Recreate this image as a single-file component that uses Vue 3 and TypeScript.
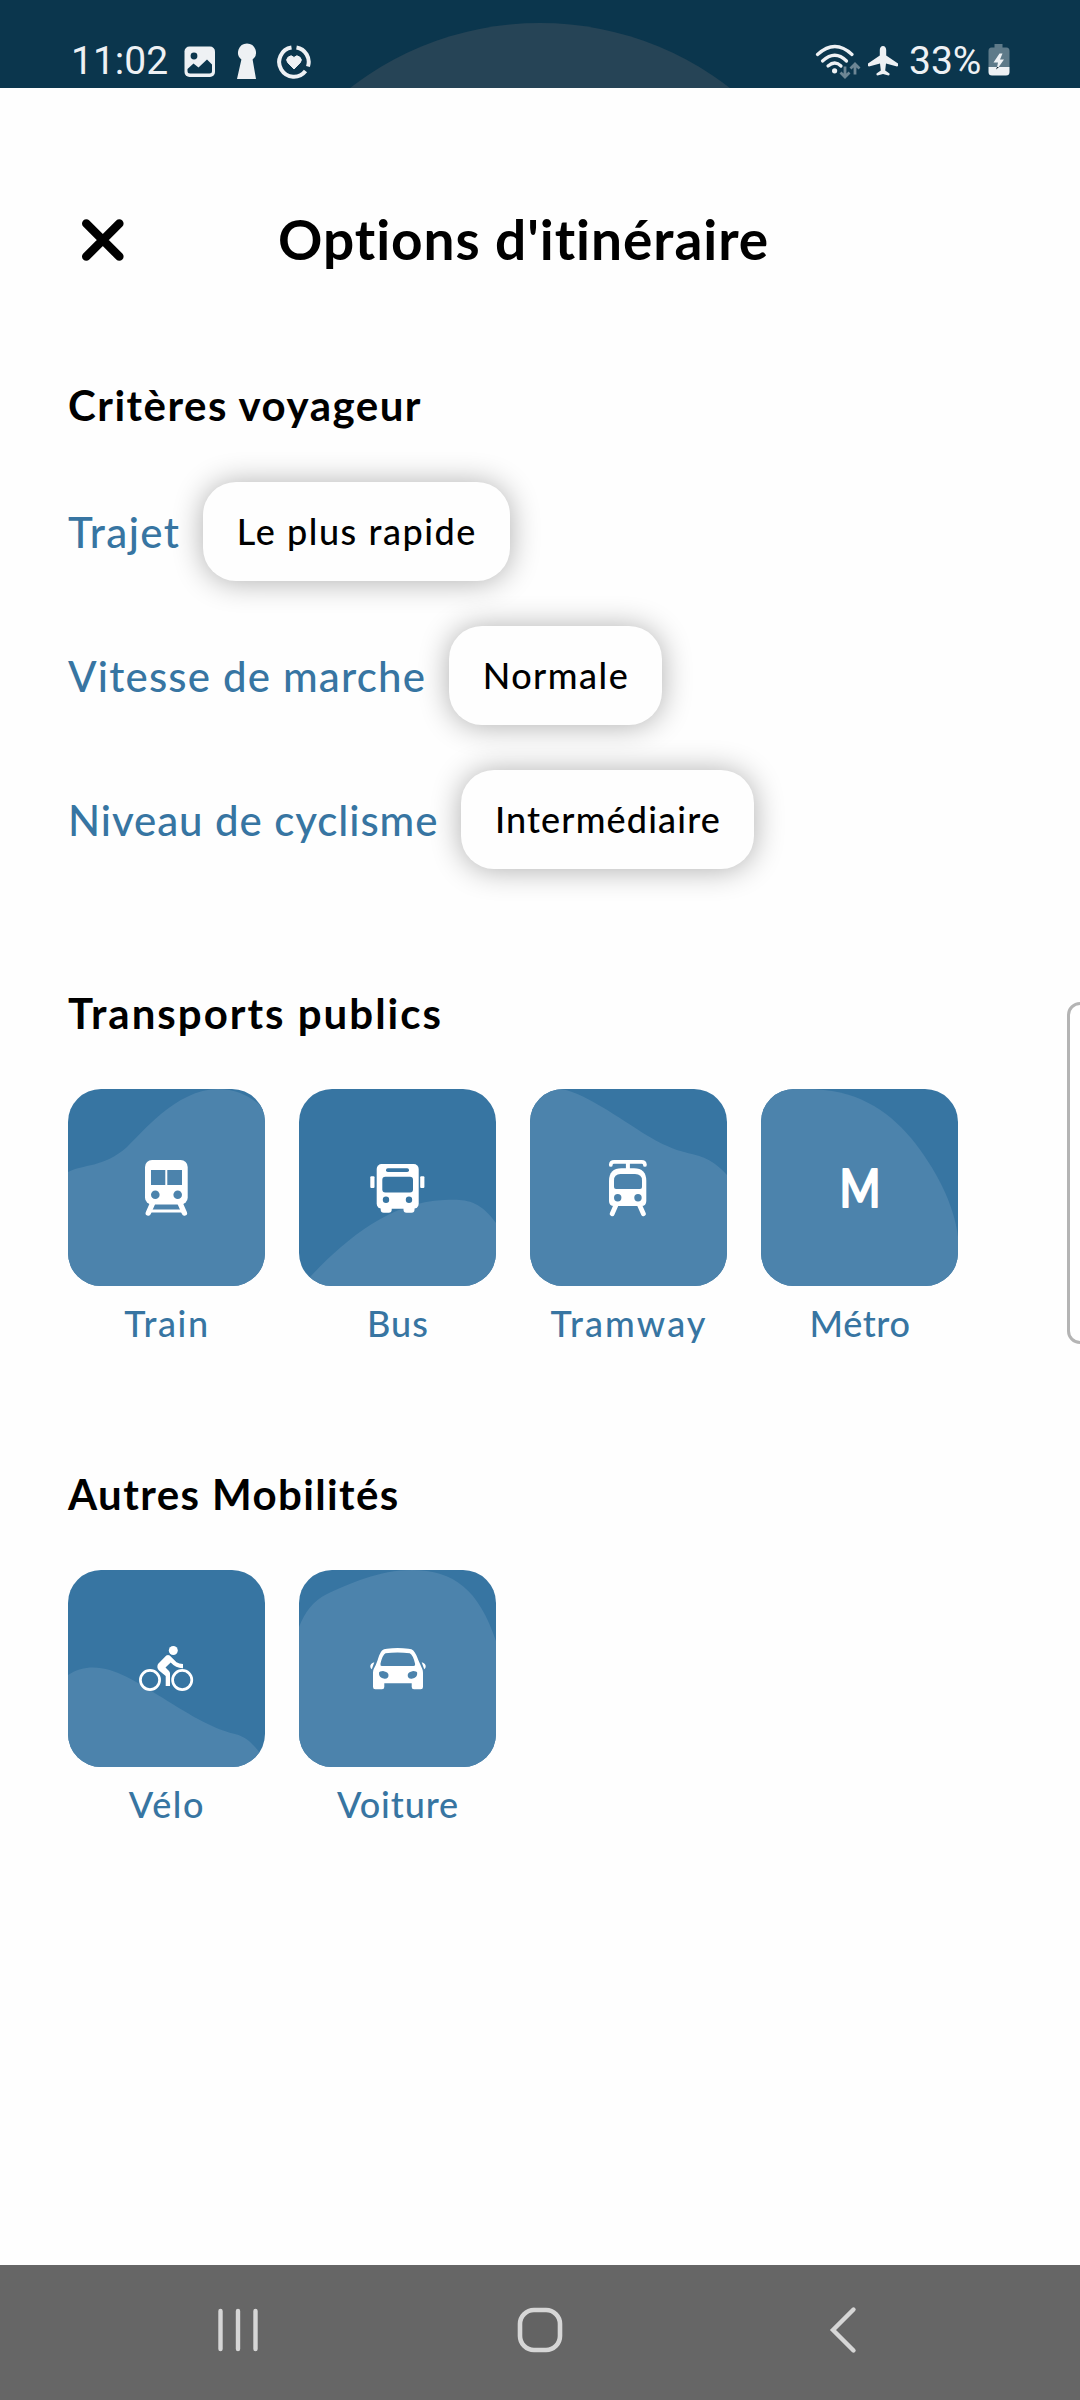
<script setup lang="ts">
interface Criterion {
  label: string
  value: string
  labelTracking: number
  valueTracking: number
}

interface Mode {
  id: 'train' | 'bus' | 'tram' | 'metro' | 'bike' | 'car'
  name: string
  wave: string
  tracking: number
}

interface ModeGroup {
  title: string
  tracking: number
  modes: Mode[]
}

const criteria: Criterion[] = [
  { label: 'Trajet', value: 'Le plus rapide', labelTracking: 1.4, valueTracking: 1.55 },
  { label: 'Vitesse de marche', value: 'Normale', labelTracking: 1.18, valueTracking: 1.5 },
  { label: 'Niveau de cyclisme', value: 'Intermédiaire', labelTracking: 0.92, valueTracking: 1.15 },
]

const groups: ModeGroup[] = [
  {
    title: 'Transports publics',
    tracking: 2,
    modes: [
      { id: 'train', name: 'Train', tracking: 1.6, wave: 'M0 83C15 75 35 79 59 58C72 46 108 0 150 0C172 0 184 10 197 19V197H0Z' },
      { id: 'bus', name: 'Bus', tracking: 1.1, wave: 'M0 199L11 188C45 152 90 113 145 111C165 110 180 110 197 134V197Z' },
      { id: 'tram', name: 'Tramway', tracking: 2.1, wave: 'M0 0H28C50 0 90 30 118 47C140 60 150 62 162 65C180 69 190 78 197 86V197H0Z' },
      { id: 'metro', name: 'Métro', tracking: 0.6, wave: 'M0 0H45C95 0 125 20 150 49C175 80 193 115 197 148V197H0Z' },
    ],
  },
  {
    title: 'Autres Mobilités',
    tracking: 1.4,
    modes: [
      { id: 'bike', name: 'Vélo', tracking: 1.6, wave: 'M0 105C30 85 65 110 85 122C110 137 140 158 167 164C180 167 187 177 192 183L197 190V197H0Z' },
      { id: 'car', name: 'Voiture', tracking: 0.9, wave: 'M0 57C6 42 14 31 28 24C50 14 80 0 113 0C155 0 180 20 197 71V197H0Z' },
    ],
  },
]
</script>

<template>
  <div class="screen">
    <div class="status">
      <svg class="arc" width="1080" height="88" viewBox="0 0 1080 88"><circle cx="540" cy="333" r="310" fill="#264456" /></svg>
      <span class="time">11:02</span>
      <svg class="s-image" width="32" height="32" viewBox="0 0 32 32">
        <rect x=".5" y=".5" width="30.5" height="30.5" rx="5" fill="#eef1f4" />
        <circle cx="10" cy="10" r="3.4" fill="#0b364d" />
        <path d="M3.5 23L9.5 17.5L14.5 21.5L23 13.5L28 18.5V25Q28 27.5 25.5 27.5H6Q3.5 27.5 3.5 25Z" fill="#0b364d" />
      </svg>
      <svg class="s-key" width="20" height="36" viewBox="0 0 20 36">
        <path d="M10 .5a9 9 0 0 1 5.6 16L19 36H0L4.400 16.500A9 9 0 0 1 10 .5Z" fill="#eef1f4" />
      </svg>
      <svg class="s-ring" width="34" height="34" viewBox="0 0 34 34">
        <g fill="none" stroke="#eef1f4" stroke-width="4">
          <path d="M14.500 2.500A14.700 14.700 0 1 0 28.500 26" />
          <path d="M19.500 2.500A14.700 14.700 0 0 1 31 21.500" />
        </g>
        <path d="M17 24L10.800 17.700A4 4 0 0 1 17 12.500A4 4 0 0 1 23.200 17.700Z" fill="#eef1f4" stroke="#eef1f4" stroke-width="1" stroke-linejoin="round" />
      </svg>
      <svg class="s-wifi" width="48" height="36" viewBox="0 0 48 36">
        <g fill="none" stroke="#eef1f4" stroke-width="3.200" stroke-linecap="round">
          <path d="M2.500 10.500Q20 -5.500 37 10.500" />
          <path d="M7.500 17Q20 5.500 31.500 17" />
          <path d="M13 22Q20 16 26 22" />
        </g>
        <circle cx="19.600" cy="26.800" r="2.600" fill="#eef1f4" />
        <g fill="none" stroke="#6d8694" stroke-width="2.800">
          <path d="M30 22.500V33M25.500 28.500L30 33L34.500 28.500" />
          <path d="M40 30.500V20M35.500 24.500L40 20L44.500 24.500" />
        </g>
      </svg>
      <svg class="s-plane" width="32" height="32" viewBox="0 0 32 32">
        <path d="M16 1C14 1 12.800 3 12.800 5V10.500L1 18.500Q.5 21 2 21.500L13 18.500L13.800 25.500L9.500 28.500Q9 30.500 10.500 30.500L16 29L21.500 30.500Q23 30.500 22.500 28.500L18.200 25.500L19 18.500L30 21.500Q31.500 21 31 18.500L19.200 10.500V5C19.200 3 18 1 16 1Z" fill="#eef1f4" />
      </svg>
      <span class="level">33%</span>
      <svg class="s-batt" width="22" height="33" viewBox="0 0 22 33">
        <path d="M6.500 0H14.500V3.500H18.500Q21.500 3.500 21.500 7V23H.5V7Q.5 3.500 3.500 3.500H6.500Z" fill="#5e7a89" />
        <path d="M.5 23H21.500V28Q21.500 31.500 18 31.500H4Q.5 31.500 .5 28Z" fill="#eef1f4" />
        <path d="M11.500 9.500L5.500 18.500H10L8.500 26L16 15.500H12L14.500 9.500Z" fill="#eef1f4" />
        <path d="M8 25.500L9 23H11Z" fill="#0b1c26" />
      </svg>
    </div>

    <header class="head">
      <svg width="70" height="70" viewBox="0 0 70 70">
        <path d="M18.300 18.500L51.300 51.500M51.300 18.500L18.300 51.500" stroke="#000" stroke-width="8.600" stroke-linecap="round" />
      </svg>
      <h1>Options d'itinéraire</h1>
    </header>

    <section class="criteria">
      <h2 style="letter-spacing: 1.5px">Critères voyageur</h2>
      <div class="rows">
        <div v-for="c in criteria" :key="c.label" class="row">
          <span class="label" :style="{ letterSpacing: c.labelTracking + 'px' }">{{ c.label }}</span>
          <button class="pill" :style="{ letterSpacing: c.valueTracking + 'px' }">{{ c.value }}</button>
        </div>
      </div>
    </section>

    <section v-for="g in groups" :key="g.title" class="group">
      <h2 :style="{ letterSpacing: g.tracking + 'px' }">{{ g.title }}</h2>
      <div class="tiles">
        <div v-for="m in g.modes" :key="m.id" class="mode">
          <svg class="tile" width="197" height="197" viewBox="0 0 197 197">
            <path :d="m.wave" fill="#4c83ac" />

            <g v-if="m.id === 'train'">
              <rect x="77" y="71" width="42.700" height="44.500" rx="7" fill="#fff" />
              <path d="M83 81h14.300v15H83zM99.300 81H114v15H99.300z" fill="#4c83ac" />
              <circle cx="87.300" cy="105.700" r="4.300" fill="#4c83ac" />
              <circle cx="109.700" cy="105.700" r="4.300" fill="#4c83ac" />
              <path d="M84.500 114.500L80.300 124M112.200 114.500L116.400 124" stroke="#fff" stroke-width="5.400" stroke-linecap="round" />
              <path d="M82 122H115" stroke="#fff" stroke-width="3.200" />
            </g>

            <g v-else-if="m.id === 'bus'">
              <rect x="77.700" y="75" width="42" height="44.700" rx="5" fill="#fff" />
              <rect x="81.700" y="115" width="11" height="8.700" rx="3" fill="#fff" />
              <rect x="104.500" y="115" width="11" height="8.700" rx="3" fill="#fff" />
              <rect x="71.300" y="87.300" width="4.200" height="11.700" rx="1" fill="#fff" />
              <rect x="121.200" y="87.300" width="4.200" height="11.700" rx="1" fill="#fff" />
              <g fill="#3775a2">
                <rect x="87" y="79.300" width="23" height="3.700" rx="1.800" />
                <rect x="83.300" y="87.700" width="30.700" height="15.800" rx="3" />
                <circle cx="87" cy="110.700" r="3.200" />
                <circle cx="110" cy="110.700" r="3.200" />
              </g>
            </g>

            <g v-else-if="m.id === 'tram'">
              <path d="M80.800 76V75.500Q81.200 72.900 84 72.900H111.700Q114.500 72.900 114.900 75.500V76" fill="none" stroke="#fff" stroke-width="3.700" stroke-linecap="round" />
              <path d="M97.900 73V81" stroke="#fff" stroke-width="4" />
              <path d="M79 92Q79 79.300 91.500 79.300H104Q116.300 79.300 116.300 92V112Q116.300 117 111.500 117H84Q79 117 79 112Z" fill="#fff" />
              <path d="M84 91.500Q84 85 90.500 85H105Q112 85 112 91.500V98Q112 100 110 100H86Q84 100 84 98Z" fill="#4c83ac" />
              <circle cx="87.700" cy="108.700" r="3.700" fill="#4c83ac" />
              <circle cx="108" cy="108.700" r="3.700" fill="#4c83ac" />
              <path d="M86 116L82.200 124.700M109.500 116L113.400 124.700" stroke="#fff" stroke-width="4.800" stroke-linecap="round" />
            </g>

            <text v-else-if="m.id === 'metro'" class="metro-sign" x="78.500" y="118" textLength="41" lengthAdjust="spacingAndGlyphs">M</text>

            <g v-else-if="m.id === 'bike'">
              <circle cx="82" cy="110" r="9.600" fill="none" stroke="#fff" stroke-width="2.700" />
              <circle cx="114.200" cy="110" r="9.600" fill="none" stroke="#fff" stroke-width="2.700" />
              <circle cx="105.300" cy="80.500" r="4.500" fill="#fff" />
              <path d="M98.300 85.500Q100 84.300 101.700 85.500L108.500 92.300Q111 94 115 94V98.200Q108 98.400 102.700 92.500L97.500 97.500L101 101Q102 102 102 103.500V116H97.700V106L91 100.500Q88.300 97.500 90 94Z" fill="#fff" />
            </g>

            <g v-else>
              <path d="M83 80.500Q84.500 79 88 78.700Q98.500 77.400 109.500 78.700Q113 79 114.300 80.500Q117 83.500 119.500 90.500Q122 96 123.300 99Q124 100.500 124 103V117Q124 119.300 121.700 119.300H115Q112.700 119.300 112.700 117V113.300H85.300V117Q85.300 119.300 83 119.300H76.300Q74 119.300 74 117V103Q74 100.500 74.700 99Q77 95 78.500 90.500Q80.500 83.500 83 80.500Z" fill="#fff" />
              <path d="M86.500 83.300Q98.500 81.600 110.700 83.300Q114 85 116 93.500Q116.500 96 114.500 96H82.700Q81 96 81.500 93.500Q83.500 85 86.500 83.300ZM80 102.700Q80.500 101 84 101Q89.500 102 89.500 105Q89.500 109 85.500 108.700Q79.500 107.500 80 102.700ZM118.200 102.700Q117.700 101 114.200 101Q108.700 102 108.700 105Q108.700 109 112.700 108.700Q118.700 107.500 118.200 102.700Z" fill="#4c83ac" />
              <path d="M75.300 92.300Q71 93.500 71.300 97Q71.600 98.500 72.800 99.200ZM122.700 92.300Q127 93.500 126.700 97Q126.400 98.500 125.200 99.200Z" fill="#fff" />
            </g>
          </svg>
          <span class="name" :style="{ letterSpacing: m.tracking + 'px' }">{{ m.name }}</span>
        </div>
      </div>
    </section>

    <nav class="nav">
      <svg class="recents" width="44" height="50" viewBox="0 0 44 50"><path d="M4.500 6V44M22 6V44M39.500 6V44" stroke="#d6d6d6" stroke-width="4.400" stroke-linecap="round" /></svg>
      <svg class="home" width="50" height="50" viewBox="0 0 50 50"><rect x="5" y="5" width="40" height="40" rx="14" fill="#636363" stroke="#d6d6d6" stroke-width="4.600" /></svg>
      <svg class="back" width="34" height="50" viewBox="0 0 34 50"><path d="M27.500 4.500L7 25L27.500 45.500" fill="none" stroke="#d6d6d6" stroke-width="4.400" stroke-linecap="round" /></svg>
    </nav>

    <div class="edge"></div>
  </div>
</template>

<style>
body {
  margin: 0;
  background: #fefefe;
}
</style>

<style scoped>
.screen {
  position: relative;
  width: 1080px;
  height: 2400px;
  overflow: hidden;
  display: flex;
  flex-direction: column;
  background: #fefefe;
  color: #000;
  font-family: Lato, 'Open Sans', sans-serif;
}

.status {
  position: relative;
  box-sizing: border-box;
  height: 88px;
  padding: 33px 0 0 71px;
  display: flex;
  align-items: center;
  background: #0b364d;
  color: #eef1f4;
  font: 39px/46px Roboto, sans-serif;
}

.status > * {
  position: relative;
  flex: none;
}

.status .arc {
  position: absolute;
  left: 0;
  top: 0;
}

.time { width: 113px; }
.s-image { margin-top: 3px; }
.s-key { margin-left: 21px; }
.s-ring { margin-left: 20px; margin-top: 2px; }
.s-wifi { margin-left: 504px; margin-top: 2px; }
.s-plane { margin-left: 4px; }
.level { margin-left: 10px; width: 78px; }
.s-batt { margin-left: 0.5px; }

.head {
  height: 100px;
  margin-top: 102px;
  padding-left: 68px;
  display: flex;
  align-items: center;
}

.head h1 {
  margin: 0 0 2px 140px;
  font-size: 55px;
  line-height: 66px;
  font-weight: 700;
  letter-spacing: 0.95px;
}

h2 {
  margin: 0;
  padding-top: 1px;
  font-size: 42px;
  line-height: 50px;
  font-weight: 700;
}

.criteria {
  margin-top: 89px;
  padding-left: 68px;
}

.rows {
  margin-top: 52px;
  display: flex;
  flex-direction: column;
  gap: 45px;
}

.row {
  display: flex;
  align-items: center;
  gap: 22.5px;
  white-space: nowrap;
}

.label {
  color: #3775a2;
  font-size: 42px;
  line-height: 50px;
  font-weight: 500;
}

.pill {
  box-sizing: border-box;
  height: 99px;
  padding: 0 33px 2px 34px;
  border: 0;
  border-radius: 33px;
  background: #fefefe;
  box-shadow: 0 1px 30px rgba(0, 0, 0, 0.32);
  color: #000;
  font-family: inherit;
  font-size: 36px;
  font-weight: 500;
}

.group {
  margin-top: 118px;
  padding-left: 68px;
}

.group + .group {
  margin-top: 123px;
}

.tiles {
  margin-top: 51px;
  display: flex;
  gap: 34px;
}

.mode {
  width: 197px;
  display: flex;
  flex-direction: column;
  align-items: center;
}

.tile {
  display: block;
  border-radius: 33px;
  background: #3775a2;
}

.metro-sign {
  font: 500 52px Lato, sans-serif;
  fill: #fff;
  stroke: #fff;
  stroke-width: 2.200px;
  stroke-linejoin: round;
}

.name {
  margin-top: 15px;
  padding-left: 1px;
  color: #3775a2;
  font-size: 36px;
  line-height: 44px;
  font-weight: 500;
}

.nav {
  box-sizing: border-box;
  height: 135px;
  margin-top: auto;
  padding: 0 0 5px 216px;
  display: flex;
  align-items: center;
  background: #666;
}

.home { margin-left: 255px; }
.back { margin-left: 261px; }

.edge {
  position: absolute;
  left: 1067px;
  top: 1002px;
  box-sizing: border-box;
  width: 40px;
  height: 342px;
  border: 3px solid #b4b4b4;
  border-radius: 13px;
  background: #fff;
}
</style>
